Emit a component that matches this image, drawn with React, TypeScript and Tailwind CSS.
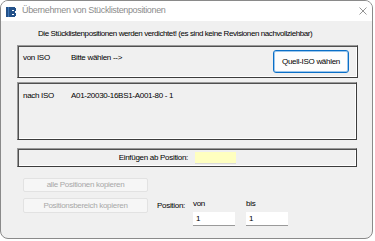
import React from "react";

const font = { fontFamily: '"Liberation Sans", Arial, sans-serif' };

function Box({ className, children }: { className?: string; children?: React.ReactNode }) {
  return (
    <div
      className={
        "border border-t-[#9a9a9a] border-l-[#9a9a9a] border-r-[#3c3c3c] border-b-[#3c3c3c] shadow-[inset_1px_1px_0_#505050,inset_-1px_-1px_0_#ffffff] " +
        (className ?? "")
      }
    >
      {children}
    </div>
  );
}

export default function App() {
  return (
    <div className="w-[375px] h-[241px] bg-white" style={font}>
      <div className="w-[373px] h-[239px] border border-[#8a8a8a] rounded-[8px] overflow-hidden flex flex-col bg-[#f0f0f0]">
        <div className="h-[20px] bg-white flex items-center shrink-0">
          <svg className="ml-[5px] mt-[1px]" width="10" height="10" viewBox="0 0 10 10">
            <rect x="0" y="0" width="10" height="10" fill="#24528a" />
            <rect x="2" y="0" width="1" height="10" fill="#3f78b8" />
            <rect x="6" y="3" width="2" height="1" fill="#ffffff" />
            <rect x="6" y="7" width="2" height="1" fill="#ffffff" />
            <rect x="9" y="0" width="1" height="1" fill="#ffffff" />
            <rect x="9" y="4" width="1" height="2" fill="#ffffff" />
            <rect x="9" y="9" width="1" height="1" fill="#ffffff" />
          </svg>
          <span className="ml-[6px] text-[9px] tracking-[-0.35px] text-[#8c8c8c]">Übernehmen von Stücklistenpositionen</span>
          <svg className="ml-auto mr-[5px]" width="8" height="8" viewBox="0 0 8 8">
            <path d="M0.5 0.5L7.5 7.5M7.5 0.5L0.5 7.5" stroke="#7a7a7a" strokeWidth="0.8" />
          </svg>
        </div>

        <div className="flex-1 flex flex-col pl-[16px]">
          <div className="pl-[21px] pt-[8px] h-[24px] text-[8px] tracking-[-0.42px] leading-[10px] text-black">
            Die Stücklistenpositionen werden verdichtet! (es sind keine Revisionen nachvollziehbar)
          </div>

          <Box className="w-[341px] h-[33px] flex items-start text-[8px] tracking-[-0.3px] leading-[10px]">
            <span className="ml-[5px] mt-[7px] w-[48px]">von ISO</span>
            <span className="mt-[7px]">Bitte wählen --&gt;</span>
            <button className="ml-auto mr-[8px] mt-[4px] w-[76px] h-[23px] rounded-[3px] border border-[#0a6fc7] bg-[#fdfdfd] text-[8px] tracking-[-0.3px] text-black shadow-[inset_0_0_0_1px_#9cc6ec]">
              Quell-ISO wählen
            </button>
          </Box>

          <Box className="mt-[4px] w-[340px] h-[58px] flex items-start text-[8px] tracking-[-0.3px] leading-[10px]">
            <span className="ml-[5px] mt-[8px] w-[48px]">nach ISO</span>
            <span className="mt-[8px]">A01-20030-16BS1-A001-80 - 1</span>
          </Box>

          <Box className="mt-[8px] w-[340px] h-[19px] flex items-center text-[8px] tracking-[-0.3px] leading-[10px]">
            <span className="w-[170px] text-right">Einfügen ab Position:</span>
            <div className="ml-[7px] w-[41px] h-[12px] bg-[#ffffc0] border-b border-[#dadada]" />
          </Box>

          <div className="pl-[6px] mt-[11px] flex flex-col text-[8px] tracking-[-0.3px] leading-[10px]">
            <button className="w-[125px] h-[14px] rounded-[2px] border border-[#e2e2e2] bg-[#f6f6f6] text-[#a8a8a8] text-[8px] tracking-[-0.3px]">
              alle Positionen kopieren
            </button>
            <div className="mt-[6px] flex items-start">
              <button className="w-[125px] h-[15px] rounded-[2px] border border-[#e2e2e2] bg-[#f6f6f6] text-[#a8a8a8] text-[8px] tracking-[-0.3px]">
                Positionsbereich kopieren
              </button>
              <span className="ml-[9px] mt-[3px] w-[36px]">Position:</span>
              <div className="flex flex-col">
                <span className="mt-[1px] h-[12px]">von</span>
                <div className="mt-[1px] w-[42px] h-[14px] bg-white border-b border-[#9a9a9a] pl-[3px] leading-[13px]">1</div>
              </div>
              <div className="ml-[11px] flex flex-col">
                <span className="mt-[1px] h-[12px]">bis</span>
                <div className="mt-[1px] w-[42px] h-[14px] bg-white border-b border-[#9a9a9a] pl-[3px] leading-[13px]">1</div>
              </div>
            </div>
          </div>
        </div>
      </div>
    </div>
  );
}
